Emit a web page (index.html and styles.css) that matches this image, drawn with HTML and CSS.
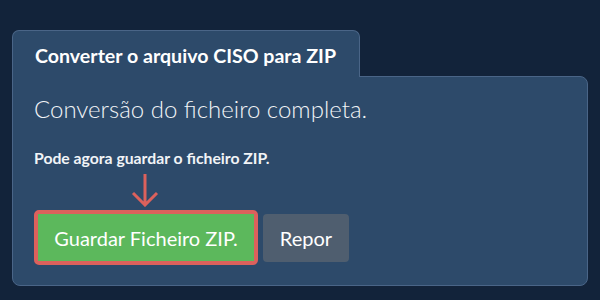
FILE: index.html
```html
<!DOCTYPE html>
<html lang="pt">
<head>
    <meta charset="UTF-8">
    <title>Converter CISO para ZIP</title>
    <link rel="stylesheet" href="styles.css">
</head>
<body>

    <div class="wrap">
        <div class="tab">Converter o arquivo CISO para ZIP</div>

        <div class="panel">
            <h2 class="status">Conversão do ficheiro completa.</h2>
            <p class="hint">Pode agora guardar o ficheiro ZIP.</p>

            <!-- seta a apontar para o botão -->
            <div class="pointer">
                <svg width="28" height="34" viewBox="0 0 28 34">
                    <path d="M14 1 V32 M2 20 L14 32 L26 20" fill="none" stroke="#dc615c" stroke-width="3"/>
                </svg>
            </div>

            <div class="actions">
                <div class="highlight">
                    <button class="btn btn-save">Guardar Ficheiro ZIP.</button>
                </div>
                <button class="btn btn-reset">Repor</button>
            </div>
        </div>
    </div>

</body>
</html>
```

FILE: styles.css
```css
body {
    font-family: Lato, "Open Sans", sans-serif;
    background-color: #12233a;
    color: #fff;
    margin: 0;
    padding: 0;
}

.wrap {
    padding: 30px 12px 0 12px;
}

.tab {
    display: inline-block;
    position: relative;
    margin-bottom: -1px;
    padding: 15px 23px 11px 22px;
    background-color: #2d4a6a;
    border: 1px solid #4a6587;
    border-bottom: none;
    border-radius: 7px 7px 0 0;
    font-size: 19.6px;
    font-weight: bold;
    line-height: 20px;
}

.panel {
    background-color: #2d4a6a;
    border: 1px solid #4a6587;
    border-radius: 0 8px 8px 8px;
    padding: 17px 21px 20px 21px;
}

.status {
    margin: 0;
    font-size: 24px;
    font-weight: 300;
    line-height: 30px;
    color: #f1f4f7;
}

.hint {
    margin: 24px 0 0 0;
    font-size: 15.75px;
    font-weight: bold;
    line-height: 20px;
    color: #f1f4f7;
}

.pointer {
    margin: 5px 0 0 97px;
    height: 34px;
}

.pointer svg {
    display: block;
}

.actions {
    display: flex;
    align-items: center;
    gap: 5px;
    margin-top: 3px;
}

.highlight {
    border: 4px solid #dc615c;
    border-radius: 5px;
    display: flex;
}

.btn {
    font-family: Lato, "Open Sans", sans-serif;
    font-size: 20px;
    color: #fff;
    border: none;
    cursor: pointer;
}

.btn-save {
    background-color: #5cb85c;
    width: 216px;
    height: 47px;
    padding: 0;
}

.btn-reset {
    background-color: #4f5e6f;
    width: 86px;
    height: 48px;
    border-radius: 4px;
    padding: 0;
}
```
